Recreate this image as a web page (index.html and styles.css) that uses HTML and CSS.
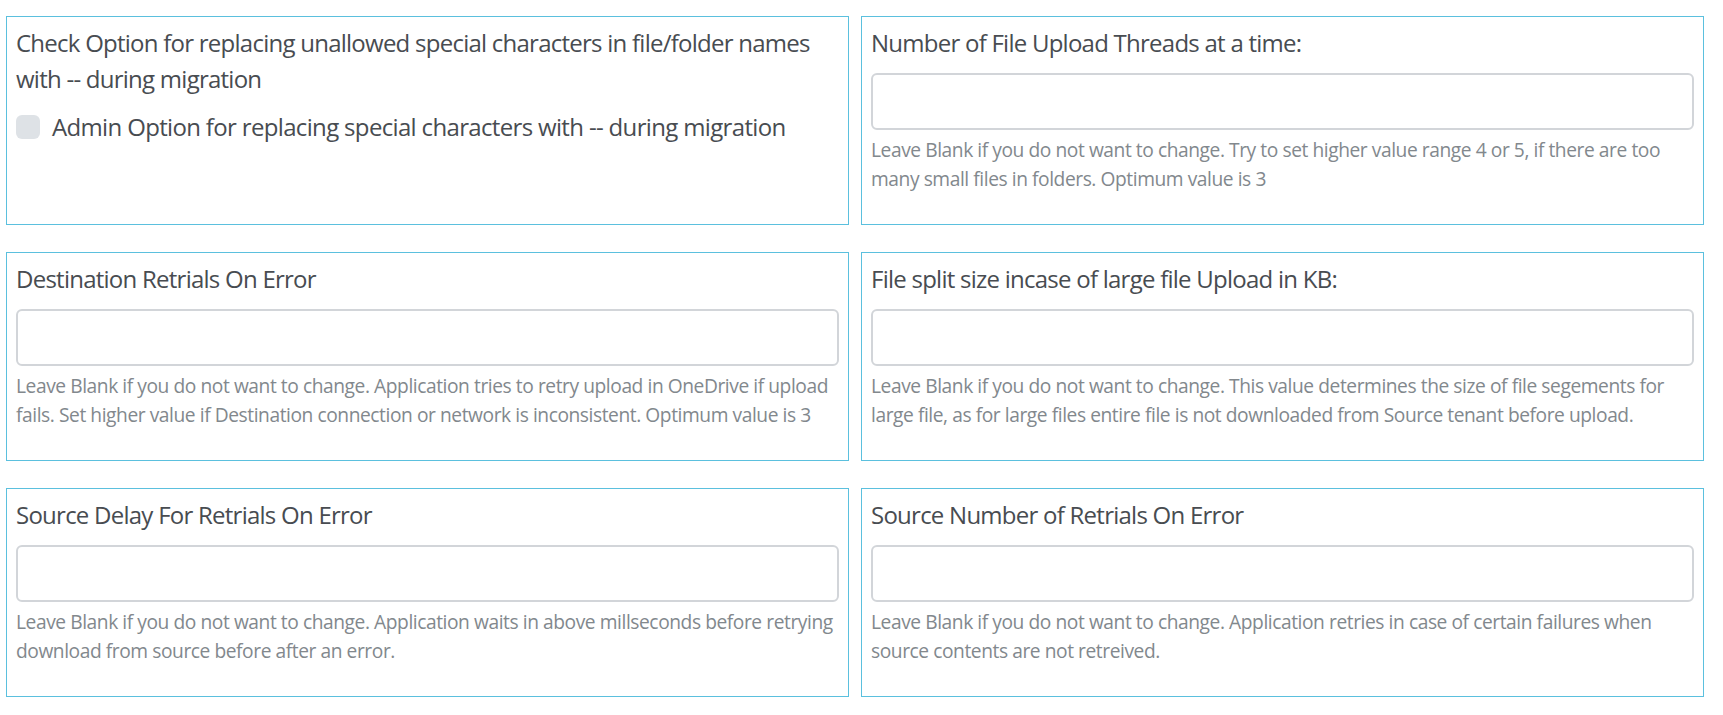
FILE: index.html
```html
<!DOCTYPE html>
<html lang="en">
<head>
<meta charset="utf-8">
<title>Migration settings</title>
<link rel="stylesheet" href="styles.css">
</head>
<body>
<div class="grid">
  <div class="card">
    <div class="label">Check Option for replacing unallowed special characters in file/folder names with -- during migration</div>
    <label class="check"><span class="box"></span><span>Admin Option for replacing special characters with -- during migration</span></label>
  </div>
  <div class="card">
    <label class="label">Number of File Upload Threads at a time:</label>
    <input class="field" type="text">
    <small class="help">Leave Blank if you do not want to change. Try to set higher value range 4 or 5, if there are too many small files in folders. Optimum value is 3</small>
  </div>
  <div class="card">
    <label class="label">Destination Retrials On Error</label>
    <input class="field" type="text">
    <small class="help">Leave Blank if you do not want to change. Application tries to retry upload in OneDrive if upload fails. Set higher value if Destination connection or network is inconsistent. Optimum value is 3</small>
  </div>
  <div class="card">
    <label class="label">File split size incase of large file Upload in KB:</label>
    <input class="field" type="text">
    <small class="help">Leave Blank if you do not want to change. This value determines the size of file segements for large file, as for large files entire file is not downloaded from Source tenant before upload.</small>
  </div>
  <div class="card">
    <label class="label">Source Delay For Retrials On Error</label>
    <input class="field" type="text">
    <small class="help">Leave Blank if you do not want to change. Application waits in above millseconds before retrying download from source before after an error.</small>
  </div>
  <div class="card">
    <label class="label">Source Number of Retrials On Error</label>
    <input class="field" type="text">
    <small class="help">Leave Blank if you do not want to change. Application retries in case of certain failures when source contents are not retreived.</small>
  </div>
</div>
</body>
</html>
```
FILE: styles.css
```css
html, body {
  margin: 0;
  padding: 0;
  background: #ffffff;
}
body {
  font-family: "Open Sans", "Noto Sans", sans-serif;
  color: #484c51;
  letter-spacing: -0.027em;
}
.grid {
  display: grid;
  grid-template-columns: 843px 843px;
  column-gap: 12px;
  row-gap: 27px;
  padding: 16px 0 0 6px;
}
.card {
  box-sizing: border-box;
  height: 209px;
  border: 1px solid #5bc0de;
  padding: 8px 9px 0 9px;
}
.label {
  display: block;
  font-size: 24px;
  line-height: 36px;
  margin-bottom: 12px;
  letter-spacing: -0.75px;
}
.field {
  display: block;
  box-sizing: border-box;
  width: 100%;
  height: 57px;
  margin: 0;
  border: 2px solid #d2d5d9;
  border-radius: 6px;
  background: #fff;
  font: inherit;
  outline: none;
}
.help {
  display: block;
  margin-top: 6px;
  font-size: 19.2px;
  line-height: 28.8px;
  color: #82888d;
}
.check {
  display: flex;
  align-items: flex-start;
  font-size: 24px;
  line-height: 36px;
  letter-spacing: -0.66px;
}
.box {
  flex: none;
  width: 24px;
  height: 24px;
  margin: 6px 12px 0 0;
  border-radius: 6px;
  background: #dee2e6;
}
```
